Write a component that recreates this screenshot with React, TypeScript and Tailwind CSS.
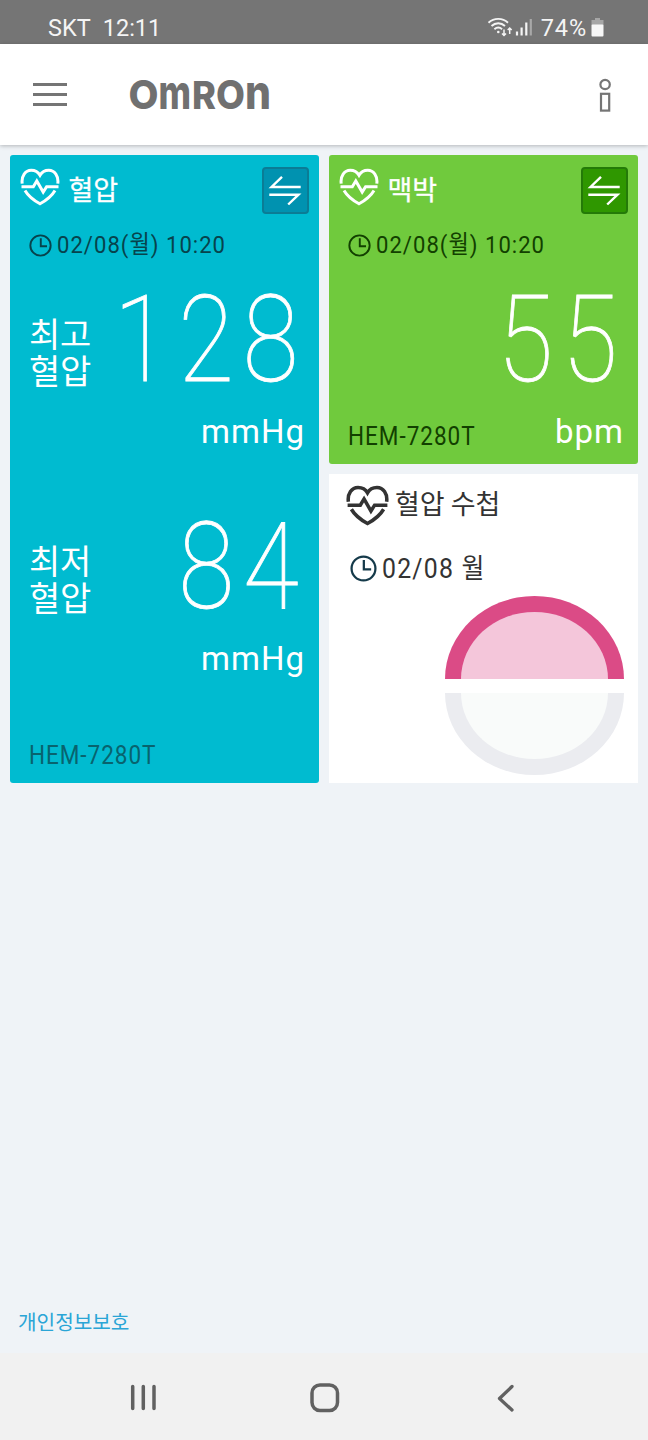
import type { ReactNode } from 'react';

type IconProps = {
  className?: string;
};

function HeartPulse({ className }: IconProps) {
  return (
    <svg viewBox="0 0 40 38" fill="none" stroke="currentColor" className={className}>
      <path d="M2.2 15.6C1.2 8 5.4 2.2 11.2 2.2c4 0 7 1.8 8.8 5 1.8-3.2 4.8-5 8.8-5 5.8 0 10 5.8 9 13.4" />
      <path d="M1.5 18.7h11.8l3.5-5.8 6.4 11.2 3.4-5.4h11.9" />
      <path d="M5 22.5C8.5 28.5 14 32.5 20 35.8 26 32.5 31.5 28.5 35 22.5" />
    </svg>
  );
}

function ClockIcon({ className }: IconProps) {
  return (
    <svg viewBox="0 0 24 24" fill="none" stroke="currentColor" strokeWidth="2" className={className}>
      <circle cx="12" cy="12" r="10.6" />
      <path d="M12.3 4.5v8.2h6.5" />
    </svg>
  );
}

function SwapButton({ className }: IconProps) {
  return (
    <button className={`h-[47px] w-[47px] rounded-[4px] border-2 text-white ${className}`}>
      <svg viewBox="2 2 43 43" fill="none" stroke="currentColor" strokeWidth="2.4">
        <path d="M38.7 20H9.5L20 9.8" />
        <path d="M7.3 27.7H36.5L26.2 37.5" />
      </svg>
    </button>
  );
}

const logoLetters = [
  { char: 'O', x: 0.5, width: 30, size: 39.5, weight: 800 },
  { char: 'm', x: 30.5, width: 32.5, size: 48, weight: 800 },
  { char: 'R', x: 64, width: 24, size: 38, weight: 800 },
  { char: 'O', x: 88, width: 29, size: 39.5, weight: 800 },
  { char: 'n', x: 117, width: 26, size: 48, weight: 800 },
];

function OmronLogo() {
  return (
    <svg viewBox="0 0 146 64" fill="#707070" fontFamily="Inter, sans-serif" className="h-[64px] w-[146px] overflow-visible">
      {logoLetters.map((letter) => (
        <text
          key={letter.x}
          x={letter.x}
          y="46"
          fontSize={letter.size}
          fontWeight={letter.weight}
          textLength={letter.width}
          lengthAdjust="spacingAndGlyphs"
        >
          {letter.char}
        </text>
      ))}
    </svg>
  );
}

function StatusBar() {
  return (
    <div className="flex h-[44px] items-center justify-between bg-[#757575] pt-[12px] pr-[43px] pl-[48px] text-[23.5px] leading-[32px] text-[#f4f4f4]">
      <div className="flex gap-[12px]">
        <span>SKT</span>
        <span>12:11</span>
      </div>
      <div className="flex items-center">
        <svg viewBox="0 0 26 22" fill="none" stroke="currentColor" strokeWidth="1.9" className="-mt-[3px] h-[22px] w-[26px]">
          <path d="M1.5 6.8c5.5-5.2 14-5.2 19.5 0" />
          <path d="M4.5 10c3.9-3.7 9.6-3.7 13.5 0" />
          <path d="M7.4 13.2c2.3-2.1 5.4-2.1 7.7 0" />
          <circle cx="11.3" cy="16" r="1.3" fill="currentColor" stroke="none" />
          <path d="M17 13.5v6M15 17.5l2 2 2-2M22.7 18v-6M20.7 14l2-2 2 2" strokeWidth="1.5" />
        </svg>
        <svg viewBox="0 0 18 20" stroke="currentColor" strokeWidth="2.2" className="-mt-[3px] ml-[2px] h-[20px] w-[18px]">
          <path d="M2 18.5v-4M6.6 18.5v-8M11.3 18.5v-13" />
          <path d="M15.8 18.5V2" opacity="0.4" />
        </svg>
        <span className="ml-[8px] tracking-[0.9px]">74%</span>
        <svg viewBox="0 0 14 20" className="-mt-[3px] ml-[4px] h-[20px] w-[14px]">
          <path d="M4 1h5v2h3.5v5h-12V3H4z" fill="#a6a6a6" />
          <rect x="0.5" y="7.5" width="12" height="12" rx="1" fill="#f7f7f7" />
        </svg>
      </div>
    </div>
  );
}

function Header() {
  return (
    <header className="flex h-[101px] items-center bg-white pr-[36px] pl-[33px] text-[#757575] shadow-[0_1px_4px_rgba(0,0,0,0.25)]">
      <button className="flex w-[34px] flex-col gap-[7px]">
        <span className="h-[3px] w-full bg-[#757575]" />
        <span className="h-[3px] w-full bg-[#757575]" />
        <span className="h-[3px] w-full bg-[#757575]" />
      </button>
      <div className="ml-[61px]">
        <OmronLogo />
      </div>
      <svg viewBox="0 0 14 34" fill="none" stroke="currentColor" strokeWidth="2.2" className="ml-auto h-[34px] w-[14px]">
        <circle cx="7.1" cy="6.5" r="4.7" />
        <rect x="3" y="15.8" width="8.2" height="16.8" />
      </svg>
    </header>
  );
}

function CardHeader({ title, button }: { title: string; button: string }) {
  return (
    <div className="flex h-[47px] items-center pr-[10.5px] pl-[10px] text-white">
      <HeartPulse className="-mt-[7px] h-[38px] w-[40px] stroke-3" />
      <h2 className="ml-[8.5px] text-[27px] leading-[40px] [-webkit-text-stroke:0.3px]">{title}</h2>
      <SwapButton className={`ml-auto ${button}`} />
    </div>
  );
}

function DateRow({ children }: { children: ReactNode }) {
  return (
    <div className="mt-[15px] flex h-[32px] items-center pl-[19px]">
      <ClockIcon className="h-[23px] w-[23px]" />
      <span className="ml-[5px] origin-left scale-x-[0.9] text-[24.5px] leading-[32px] tracking-[1.15px] whitespace-nowrap">
        {children}
      </span>
    </div>
  );
}

function BigValue({ children }: { children: ReactNode }) {
  return (
    <div className="origin-right scale-x-[0.84] pt-[19px] text-right text-[121px] leading-[121px] font-thin tracking-[10.5px] text-white [-webkit-text-stroke:0.9px]">
      {children}
    </div>
  );
}

function Pressure({ label, value }: { label: string; value: string }) {
  return (
    <div className="h-[227px] text-white">
      <div className="flex h-[130px] items-start justify-between pr-[12px] pl-[19px]">
        <div className="-mr-[40px] w-[68px] shrink-0 pt-[56px] text-[34px] leading-[37px] tracking-[-0.3px]">
          {label}
          <br />
          혈압
        </div>
        <BigValue>{value}</BigValue>
      </div>
      <div className="pt-[21px] pr-[14px] text-right text-[33px] leading-[40px] tracking-[1px]">mmHg</div>
    </div>
  );
}

export default function App() {
  return (
    <div className="flex h-[1440px] w-[648px] flex-col bg-[#eff3f7] font-[Roboto,'Noto_Sans_CJK_KR',sans-serif]">
      <StatusBar />
      <Header />

      {/* Measurement cards */}
      <main className="flex gap-[10px] px-[10px] pt-[10px]">
        <section className="flex h-[628px] w-[309px] flex-col rounded-[3px] bg-[#00bbd0] pt-[12px] text-[#07434c]">
          <CardHeader title="혈압" button="border-[#0b7c95] bg-[#0092b0]" />
          <DateRow>02/08(월) 10:20</DateRow>
          <Pressure label="최고" value="128" />
          <Pressure label="최저" value="84" />
          <div className="mt-[25px] origin-left scale-x-[0.9] pl-[21px] text-[25px] leading-[32px] tracking-[1.1px] text-[#08636e]">
            HEM-7280T
          </div>
        </section>

        <div className="flex flex-col gap-[10px]">
          <section className="h-[309px] w-[309px] rounded-[3px] bg-[#70ca3d] pt-[12px] text-[#124000]">
            <CardHeader title="맥박" button="border-[#247a08] bg-[#2f9700]" />
            <DateRow>02/08(월) 10:20</DateRow>
            <div className="flex h-[130px] items-start justify-end pr-[12px]">
              <BigValue>55</BigValue>
            </div>
            <div className="flex items-start justify-between pt-[21px] pr-[14px] pl-[19px]">
              <span className="origin-left scale-x-[0.9] pt-[9px] text-[25px] leading-[32px] tracking-[1.1px]">HEM-7280T</span>
              <span className="text-[33px] leading-[40px] tracking-[1px] text-white">bpm</span>
            </div>
          </section>

          {/* Diary */}
          <section className="h-[309px] w-[309px] bg-white pt-[10px] text-[#333]">
            <div className="flex h-[42px] items-center pl-[17px]">
              <HeartPulse className="h-[41px] w-[43px] stroke-[3.3]" />
              <h2 className="ml-[6px] text-[27px] leading-[40px] tracking-[-0.2px]">혈압 수첩</h2>
            </div>
            <div className="mt-[22px] flex h-[40px] items-center pl-[21px]">
              <ClockIcon className="h-[27px] w-[27px] text-[#153a4a]" />
              <span className="ml-[5px] origin-left scale-x-[0.92] pt-[3px] text-[27px] leading-[37px] tracking-[1.3px]">02/08 월</span>
            </div>
            <div className="mt-[8px] ml-[116px] flex flex-col gap-[14px]">
              <div className="h-[83px] w-[179px] border-[16px] border-b-0 border-[#db4b86] bg-[#f4c6da] [border-radius:50%_50%_0_0/100%_100%_0_0]" />
              <div className="h-[82px] w-[179px] border-[16px] border-t-0 border-[#ebecf0] bg-[#f9fbfa] [border-radius:0_0_50%_50%/0_0_100%_100%]" />
            </div>
          </section>
        </div>
      </main>

      <a href="#" className="mt-auto mb-[14px] ml-[18px] text-[20.2px] leading-[32px] text-[#2aa5d6]">
        개인정보보호
      </a>

      {/* System navigation */}
      <nav className="flex h-[87px] items-center justify-between bg-[#f1f1f1] px-[128px] text-[#616161]">
        <svg viewBox="0 0 30 30" stroke="currentColor" strokeWidth="3.5" strokeLinecap="round" className="h-[30px] w-[30px]">
          <path d="M4.7 4.5v22M15.3 4.5v22M26 4.5v22" />
        </svg>
        <svg viewBox="0 0 32 32" fill="none" stroke="currentColor" strokeWidth="3.5" className="h-[32px] w-[32px]">
          <rect x="4" y="4" width="25.5" height="25.5" rx="8" />
        </svg>
        <svg viewBox="0 0 30 30" fill="none" stroke="currentColor" strokeWidth="3.3" strokeLinecap="round" strokeLinejoin="round" className="h-[30px] w-[30px]">
          <path d="M22 4.5 9.5 16.5 22 28" />
        </svg>
      </nav>
    </div>
  );
}
